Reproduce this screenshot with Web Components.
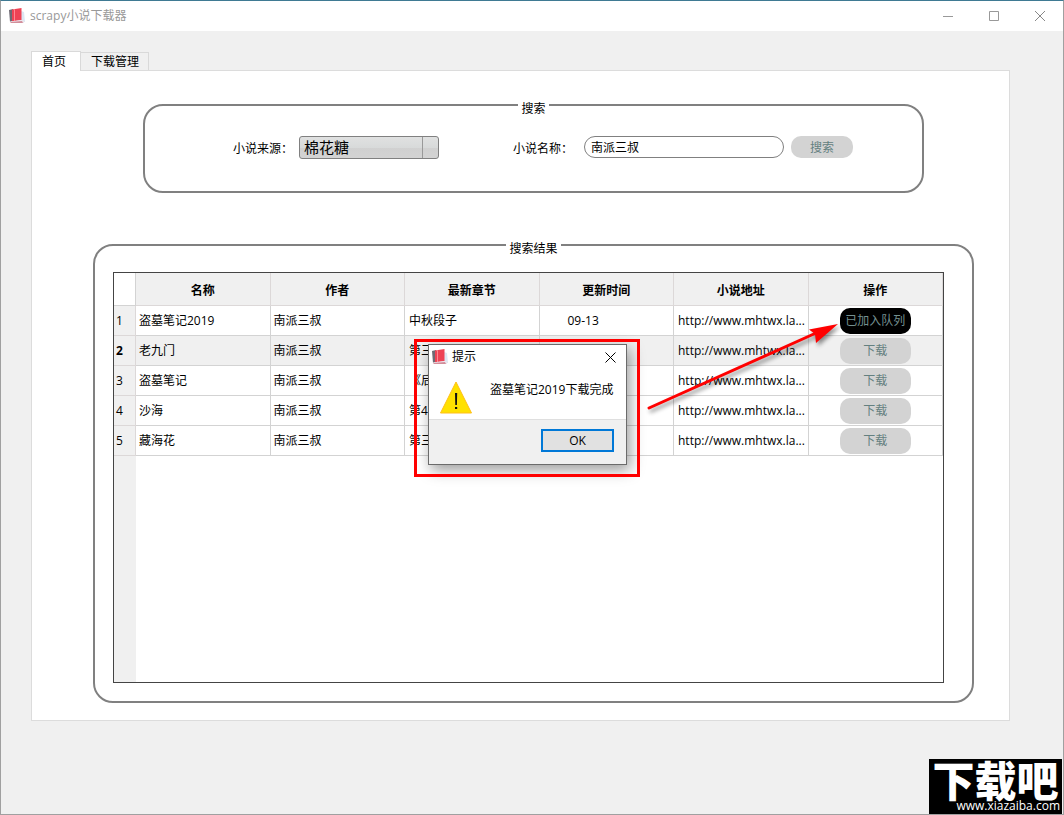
<!DOCTYPE html>
<html lang="zh-CN">
<head>
<meta charset="utf-8">
<title>scrapy小说下载器</title>
<style>
  body { margin: 0; font: 12px/16px "Open Sans", "Noto Sans CJK SC", sans-serif; color: #000; }
</style>
</head>
<body>
<app-window>
  <title-bar slot="title">scrapy小说下载器</title-bar>
  <tab-view>
    <group-box class="search" caption="搜索"><search-form></search-form></group-box>
    <group-box class="results" caption="搜索结果"><result-table></result-table></group-box>
  </tab-view>
  <message-dialog slot="over" caption="提示">盗墓笔记2019下载完成</message-dialog>
  <callout-marks slot="over"></callout-marks>
  <site-mark slot="over"></site-mark>
</app-window>

<script>
const define = (name, html, setup) => {
  const template = document.createElement('template');
  template.innerHTML = html;
  customElements.define(name, class extends HTMLElement {
    constructor() {
      super();
      this.attachShadow({ mode: 'open' }).append(template.content.cloneNode(true));
    }
    connectedCallback() { if (setup) setup(this, this.shadowRoot); }
  });
};

define('app-window', `
  <style>
    :host { display: flex; flex-direction: column; box-sizing: border-box; min-height: 100vh; position: relative;
      overflow: hidden; background: #f0f0f0; border: 1px solid #a0a0a0; border-top-color: #3f7a93; }
    main { flex: 1; display: flex; flex-direction: column; padding: 20px 53px 93px 30px; }
  </style>
  <slot name="title"></slot>
  <main><slot></slot></main>
  <slot name="over"></slot>`);

define('book-icon', `
  <style>:host { display: block; width: 16px; height: 16px; flex: none; } svg { display: block; }</style>
  <svg width="16" height="16" viewBox="0 0 16 16" aria-hidden="true">
    <path d="M12 3l3 1 1 10H3z" fill="#dce6f2"/>
    <path d="M0 2l4-1v12l-3 1z" fill="#6e6a74"/>
    <path d="M3 1.500L12.500 0v12L3 13.500z" fill="#ee4355"/>
    <path d="M5 1.200h1v12H5z" fill="#ff8790"/>
    <path d="M1 13.500l3-.5 9-1 2 1v2H2z" fill="#efe7ed"/>
    <path d="M1 14l12-.5 1 1H2z" fill="#b43649"/>
  </svg>`);

define('title-bar', `
  <style>
    :host { display: flex; align-items: center; height: 30px; background: #fff; color: #999; }
    book-icon { margin: 0 5px 0 8px; }
    .name { flex: 1; }
    button { width: 46px; height: 30px; padding: 0; border: 0; background: none; display: grid; place-items: center; }
  </style>
  <book-icon></book-icon>
  <span class="name"><slot></slot></span>
  <button aria-label="最小化"><svg width="10" height="10"><path d="M0 5.500h10" stroke="#999"/></svg></button>
  <button aria-label="最大化"><svg width="10" height="10"><path d="M.5.500h9v9h-9z" fill="none" stroke="#999"/></svg></button>
  <button aria-label="关闭"><svg width="10" height="10"><path d="M0 0l10 10M10 0L0 10" stroke="#888"/></svg></button>`);

define('tab-view', `
  <style>
    :host { flex: 1; display: flex; flex-direction: column; }
    nav { display: flex; align-items: flex-end; height: 19px; }
    button { box-sizing: border-box; height: 18px; padding: 0 9px 0 10px; border: 1px solid #d9d9d9; border-bottom: 0;
      border-left: 0; background: #f0f0f0; font: inherit; color: inherit; }
    button[aria-selected=true] { height: 20px; padding: 0 14px 0 10px; margin-bottom: -1px; background: #fff;
      position: relative; border-left: 1px solid #d9d9d9; }
    section { flex: 1; display: flex; flex-direction: column; gap: 41px; background: #fff; border: 1px solid #dcdcdc;
      padding: 23px 35px 17px 61px; }
    ::slotted(.search) { margin: 0 50px; }
    ::slotted(.results) { flex: 1; }
  </style>
  <nav role="tablist">
    <button role="tab" aria-selected="true">首页</button>
    <button role="tab" aria-selected="false">下载管理</button>
  </nav>
  <section role="tabpanel"><slot></slot></section>`);

define('group-box', `
  <style>
    :host { display: grid; grid-template: minmax(0, 1fr) / minmax(0, 1fr); }
    fieldset { display: grid; grid-template: minmax(0, 1fr) / minmax(0, 1fr); min-width: 0; margin: 0; padding: 0;
      border: 2px solid #808080; border-radius: 20px; }
    legend { margin: 0 auto; padding: 8px 3px 0; line-height: 14px; }
  </style>
  <fieldset><legend></legend><slot></slot></fieldset>`,
  (el, root) => { root.querySelector('legend').textContent = el.getAttribute('caption'); });

define('pill-button', `
  <style>
    :host { display: block; width: 62px; height: 22px; }
    button { display: block; width: 100%; height: 100%; padding: 1px 0 0; border: 0; border-radius: 10px;
      background: #d3d3d3; color: #648080; font: inherit; }
    :host([queued]) button { background: #000; color: #749090; }
  </style>
  <button type="button"><slot></slot></button>`);

define('search-form', `
  <style>
    :host { display: block; padding: 19px 20px 32px 88px; }
    form { display: flex; align-items: center; height: 24px; margin: 0; }
    label { width: 60px; padding-top: 3px; white-space: nowrap; }
    select, input { box-sizing: border-box; margin: 0; border: 1px solid #808080; color: #000; outline: 0; }
    select { appearance: none; width: 140px; height: 23px; margin: 0 74px 0 6px; padding: 0 20px 1px 4px; border-radius: 3px;
      font: 15px/20px "Open Sans", "Noto Sans CJK SC", sans-serif;
      background: linear-gradient(#999, #999) right 15px top / 1px 100% no-repeat,
        linear-gradient(#e0e1e1, #d8dada 50%, #d0d0d0 51%, #d3d3d3); }
    input { width: 200px; height: 22px; margin: 0 7px 0 11px; padding: 0 6px; border-radius: 11px; background: #fff; font: inherit; }
  </style>
  <form>
    <label for="source">小说来源：</label>
    <select id="source"><option>棉花糖</option></select>
    <label for="title">小说名称：</label>
    <input id="title" type="text" value="南派三叔">
    <pill-button>搜索</pill-button>
  </form>`);

const novels = [
  ['盗墓笔记2019', '中秋段子', '09-13'],
  ['老九门', '第三', ''],
  ['盗墓笔记', '《后', ''],
  ['沙海', '第4', ''],
  ['藏海花', '第三', '']
];

define('result-table', `
  <style>
    :host { display: flex; padding: 16px 28px 18px 18px; }
    .frame { flex: 1; border: 1px solid #444;
      background: linear-gradient(#f0f0f0, #f0f0f0) left / 22px 100% no-repeat #fff; }
    table { width: 100%; table-layout: fixed; border-collapse: separate; border-spacing: 0; }
    th, td { box-sizing: border-box; height: 30px; padding: 0 3px; border: solid #d3d3d3; border-width: 0 1px 1px 0;
      text-align: left; white-space: nowrap; overflow: hidden; background: #fff; }
    thead th { height: 33px; padding-top: 3px; text-align: center; background: #f0f0f0; border-color: #dcd8d8; }
    thead td { width: 22px; }
    tbody th { background: #f0f0f0; padding: 0 2px; font-weight: 400; border-color: #dcd8d8; }
    tbody td { padding: 0 0 0 4px; }
    tbody td:last-child, tbody td:nth-child(2), tbody td:nth-child(3) { padding: 0 3px; }
    tr.current td { background: #f0f0f0; }
    tr.current th { font-weight: 700; }
    tbody td.date { padding-left: 28px; }
    pill-button { width: 71px; height: 26px; margin: 0 auto; }
  </style>
  <div class="frame"><table>
    <thead><tr><td></td><th scope="col">名称</th><th scope="col">作者</th><th scope="col">最新章节</th>
      <th scope="col">更新时间</th><th scope="col">小说地址</th><th scope="col">操作</th></tr></thead>
    <tbody></tbody>
  </table></div>`,
  (el, root) => {
    root.querySelector('tbody').innerHTML = novels.map(([name, chapter, date], i) => `
      <tr${i === 1 ? ' class="current"' : ''}><th scope="row">${i + 1}</th><td>${name}</td><td>南派三叔</td><td>${chapter}</td>
      <td class="date">${date}</td><td>http://www.mhtwx.la...</td>
      <td>${i ? '<pill-button>下载</pill-button>' : '<pill-button queued>已加入队列</pill-button>'}</td></tr>`).join('');
  });

define('message-dialog', `
  <style>
    :host { position: absolute; left: 427px; top: 343px; box-sizing: border-box; width: 199px; border: 1px solid #6b6b6b;
      background: #fff; box-shadow: 3px 5px 14px rgba(0,0,0,.4); }
    header { display: flex; align-items: center; height: 24px; padding: 0 10px 0 3px; }
    .caption { flex: 1; margin-left: 4px; }
    header button { width: 11px; height: 11px; padding: 0; border: 0; background: none; }
    svg { display: block; }
    .body { display: flex; padding: 12px 11px 5px; gap: 18px; height: 33px; }
    .body p { margin: 1px 0 0; white-space: nowrap; }
    footer { display: flex; justify-content: flex-end; padding: 9px 12px 12px; background: #f0f0f0; border-top: 1px solid #dfdfdf; }
    footer button { box-sizing: border-box; width: 73px; height: 23px; padding: 0; border: 2px solid #0078d7;
      background: #e1e1e1; font: inherit; color: #000; }
  </style>
  <header>
    <book-icon></book-icon><span class="caption"></span>
    <button aria-label="关闭"><svg width="11" height="11"><path d="M.5.500l10 10M10.500.500l-10 10" stroke="#000"/></svg></button>
  </header>
  <div class="body">
    <svg width="32" height="33" viewBox="0 0 32 33" aria-hidden="true">
      <path d="M16 1L31.500 32H.5z" fill="#ffe100" stroke="#ffbe1a"/>
      <path d="M15 12h2.200l-.3 12h-1.600zM15 26h2.200v2H15z" fill="#111"/>
    </svg>
    <p><slot></slot></p>
  </div>
  <footer><button type="button">OK</button></footer>`,
  (el, root) => { root.querySelector('.caption').textContent = el.getAttribute('caption'); });

define('callout-marks', `
  <style>
    :host { position: absolute; left: 413px; top: 310px; pointer-events: none; }
    svg { display: block; filter: drop-shadow(2px 3px 2px rgba(0,0,0,.45)); }
    .ring { position: absolute; left: 0; top: 28px; box-sizing: border-box; width: 226px; height: 138px; border: 3px solid #f00; }
  </style>
  <div class="ring"></div>
  <svg width="430" height="110" aria-hidden="true">
    <path d="M235 97L402 22" stroke="#f00" stroke-width="3" stroke-linecap="round"/>
    <path d="M424 13L395 18.500 401 23 402 32z" fill="#f00"/>
  </svg>`);

define('site-mark', `
  <style>
    :host { position: absolute; right: 1px; bottom: -1px; box-sizing: border-box; width: 133px; height: 56px;
      background: #000; color: #fff; text-align: center; }
    .name { font: 900 42px/40px "Noto Sans CJK SC", sans-serif; white-space: nowrap; }
    .url { line-height: 14px; text-align: right; padding-right: 2px; }
  </style>
  <div class="name">下载吧</div><div class="url">www.xiazaiba.com</div>`);
</script>
</body>
</html>
